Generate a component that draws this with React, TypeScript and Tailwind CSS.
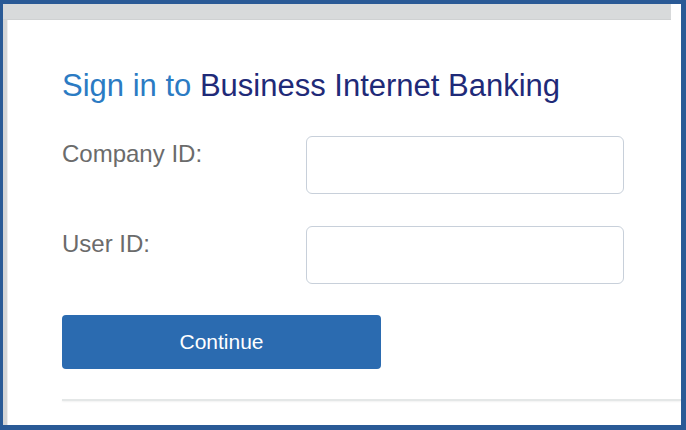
const font = { fontFamily: '"Liberation Sans", Arial, sans-serif' };

function Field({ label }: { label: string }) {
  return (
    <div className="flex items-start">
      <label className="w-[244px] mt-[6px] text-[24px] leading-[24px] text-[#6b6b6b]">{label}</label>
      <input
        type="text"
        className="w-[318px] h-[58px] rounded-[6px] border border-[#c8d0da] bg-white outline-none"
      />
    </div>
  );
}

export default function App() {
  return (
    <div className="w-[686px] h-[430px] bg-[#2a5a96] pl-[3px] pt-[4px] pr-[5px] pb-[5px] overflow-hidden" style={font}>
      <div className="h-full flex flex-col bg-white">
        {/* top gray strip */}
        <div className="flex h-[16px]">
          <div className="flex-1 bg-[#d8dadb] border-b border-[#cfd1d2]" />
          <div className="w-[10px] bg-white" />
        </div>

        <div className="flex flex-1">
          <div className="w-[4px] bg-[#d4d5d6]" />
          <div className="w-[1px] bg-[#eeeeee]" />
          <div className="flex-1 pl-[54px] pt-[50px]">
            <h1 className="text-[31px] leading-[31px] whitespace-nowrap">
              <span className="text-[#2b7bc3]">Sign in to </span>
              <span className="text-[#1f2a78]">Business Internet Banking</span>
            </h1>

            <div className="mt-[35px] flex flex-col gap-[32px]">
              <Field label="Company ID:" />
              <Field label="User ID:" />
            </div>

            <button className="mt-[31px] w-[319px] h-[54px] rounded-[4px] bg-[#2b6bb0] text-white text-[21px]">
              Continue
            </button>

            <div className="mt-[30px] h-[2px] bg-[#e4e7e7] shadow-[0_1px_2px_rgba(0,0,0,0.06)]" />
          </div>
        </div>
      </div>
    </div>
  );
}
